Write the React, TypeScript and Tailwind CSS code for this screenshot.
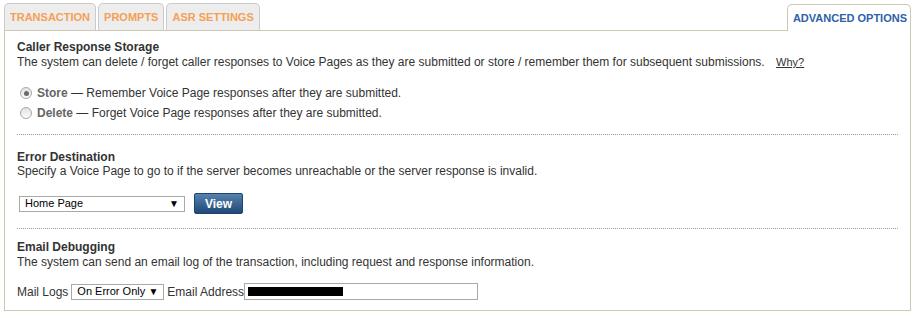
const tabs = ["TRANSACTION", "PROMPTS", "ASR SETTINGS"];

function Radio({ checked }: { checked?: boolean }) {
  return (
    <span className="flex h-[12px] w-[12px] shrink-0 items-center justify-center rounded-full border border-[#a8a8a8] bg-gradient-to-b from-[#e2e2e2] to-[#fbfbfb]">
      {checked && <span className="h-[5px] w-[5px] rounded-full bg-[#6a6a6a]" />}
    </span>
  );
}

function Select({ label, className }: { label: string; className: string }) {
  return (
    <div
      className={`flex items-center justify-between whitespace-nowrap border border-[#a9a9a9] bg-white pl-[5px] pr-[5px] text-[11px] leading-none text-black ${className}`}
    >
      <span>{label}</span>
      <span className="text-[10px]">▼</span>
    </div>
  );
}

function Dotted({ className }: { className: string }) {
  return <div className={`border-t border-dotted border-[#9a9a9a] ${className}`} />;
}

export default function App() {
  return (
    <div className="h-[318px] w-[915px] bg-white pl-[4px] pt-[4px] font-['Liberation_Sans',Arial,sans-serif] text-[#333]">
      <div className="w-[907px]">
        {/* tab strip */}
        <div className="flex h-[27px] items-end">
          <div className="flex h-full flex-1 items-end gap-[2px] border-b border-[#cdc8b4]">
            {tabs.map((t) => (
              <div
                key={t}
                className="flex h-[27px] items-center rounded-t-[5px] border border-b-0 border-[#cbcbcb] bg-[#ededed] px-[5px] text-[11px] font-bold text-[#f5a055]"
              >
                {t}
              </div>
            ))}
          </div>
          <div className="flex h-[27px] items-center rounded-t-[5px] border border-b-0 border-[#cdc8b4] bg-white pl-[5px] pr-[3px] text-[11px] font-bold text-[#2d62a8]">
            ADVANCED OPTIONS
          </div>
        </div>

        {/* panel */}
        <div className="border border-t-0 border-[#cdc8b4] px-[12px] pb-[10px] pt-[9px]">
          <div className="text-[12px] font-bold leading-[15px]">Caller Response Storage</div>
          <div className="text-[12px] leading-[15px]">
            The system can delete / forget caller responses to Voice Pages as they are submitted or store /
            remember them for subsequent submissions.{" "}
            <span className="ml-[8px] text-[11px] underline">Why?</span>
          </div>

          <div className="mt-[17px] flex flex-col gap-[8px] pl-[3px] text-[12px] leading-[12px]">
            <label className="flex items-center gap-[5px]">
              <Radio checked />
              <span>
                <span className="font-bold text-[#666]">Store</span> — Remember Voice Page responses after they are
                submitted.
              </span>
            </label>
            <label className="flex items-center gap-[5px]">
              <Radio />
              <span>
                <span className="font-bold text-[#666]">Delete</span> — Forget Voice Page responses after they are
                submitted.
              </span>
            </label>
          </div>

          <Dotted className="mt-[15px]" />

          <div className="mt-[15px] text-[12px] font-bold leading-[14px]">Error Destination</div>
          <div className="text-[12px] leading-[15px]">
            Specify a Voice Page to go to if the server becomes unreachable or the server response is invalid.
          </div>

          <div className="mt-[14px] flex items-center gap-[9px] pl-[2px]">
            <Select label="Home Page" className="h-[16px] w-[166px]" />
            <button className="h-[21px] w-[49px] rounded-[2px] border border-[#1e4470] bg-gradient-to-b from-[#5682ae] to-[#1f4a78] text-[12px] font-bold text-white">
              View
            </button>
          </div>

          <Dotted className="mt-[14px]" />

          <div className="mt-[11px] text-[12px] font-bold leading-[15px]">Email Debugging</div>
          <div className="text-[12px] leading-[15px]">
            The system can send an email log of the transaction, including request and response information.
          </div>

          <div className="mt-[13px] flex items-center text-[12px] leading-[16px]">
            <span>Mail Logs</span>
            <Select label="On Error Only" className="ml-[3px] h-[16px] w-[93px]" />
            <span className="ml-[3px]">Email Address</span>
            <div className="flex h-[17px] w-[234px] items-center border border-[#a9a9a9] bg-white pl-[3px]">
              <span className="h-[9px] w-[95px] bg-black" />
            </div>
          </div>
        </div>
      </div>
    </div>
  );
}
